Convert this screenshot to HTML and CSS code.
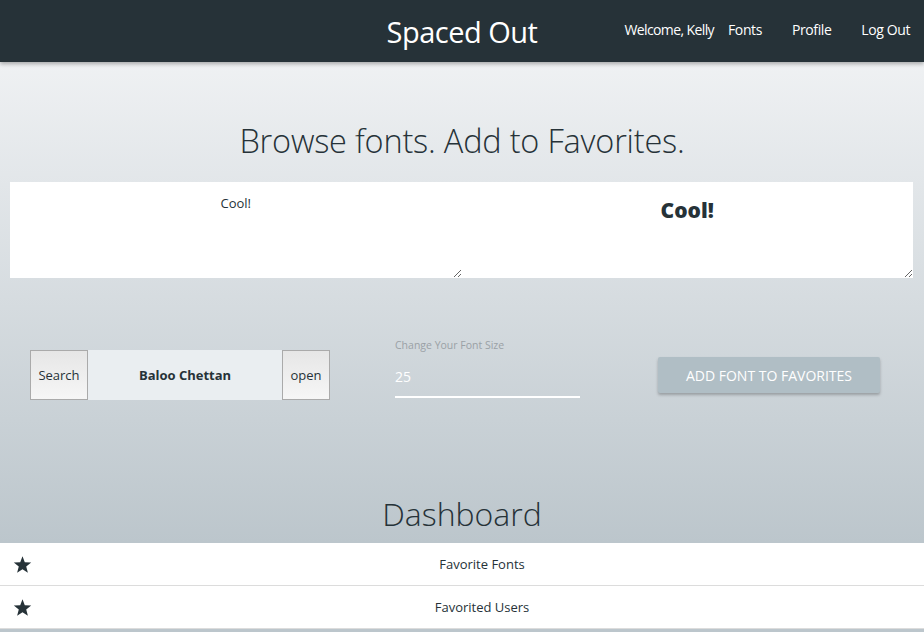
FILE: index.html
```html
<!DOCTYPE html>
<html>
<head>
<meta charset="utf-8">
<link rel="stylesheet" href="styles.css">
</head>
<body>
<nav class="navbar">
  <div class="brand">Spaced Out</div>
  <ul class="nav-links">
    <li class="welcome">Welcome, Kelly</li>
    <li>Fonts</li>
    <li>Profile</li>
    <li>Log Out</li>
  </ul>
</nav>
<main class="main">
  <h1 class="headline">Browse fonts. Add to Favorites.</h1>
  <div class="preview-row">
    <textarea class="preview plain">Cool!</textarea>
    <textarea class="preview styled">Cool!</textarea>
  </div>
  <div class="controls">
    <div class="picker">
      <button class="pick-btn">Search</button>
      <div class="font-name">Baloo Chettan</div>
      <button class="pick-btn">open</button>
    </div>
    <div class="size-field">
      <label class="size-label">Change Your Font Size</label>
      <input class="size-input" type="text" value="25">
    </div>
    <div class="add-wrap">
      <button class="add-btn">ADD FONT TO FAVORITES</button>
    </div>
  </div>
  <h2 class="dash-title">Dashboard</h2>
  <ul class="dash-list">
    <li class="dash-item">
      <svg class="star" viewBox="0 0 24 24" width="19" height="19"><path d="M12 1.5l2.9 7.6 8.1.4-6.3 5.1 2.1 7.9L12 18l-6.8 4.5 2.1-7.9L1 9.5l8.1-.4z" fill="#263238"/></svg>
      <span class="dash-text">Favorite Fonts</span>
    </li>
    <li class="dash-item">
      <svg class="star" viewBox="0 0 24 24" width="19" height="19"><path d="M12 1.5l2.9 7.6 8.1.4-6.3 5.1 2.1 7.9L12 18l-6.8 4.5 2.1-7.9L1 9.5l8.1-.4z" fill="#263238"/></svg>
      <span class="dash-text">Favorited Users</span>
    </li>
  </ul>
</main>
</body>
</html>
```
FILE: styles.css
```css
* { box-sizing: border-box; }
html, body { margin: 0; padding: 0; }
body {
  font-family: "Open Sans", "DejaVu Sans", sans-serif;
  color: #263238;
  background: #bcc6cc;
  height: 632px;
  overflow: hidden;
}
.navbar {
  height: 62px;
  background: #263238;
  display: flex;
  align-items: center;
  position: relative;
  box-shadow: 0 2px 4px rgba(0,0,0,0.3);
  z-index: 2;
}
.brand {
  position: absolute;
  left: 0; right: 0;
  text-align: center;
  color: #fff;
  font-size: 29px;
  font-weight: 400;
  letter-spacing: -0.5px;
  top: 12px;
}
.nav-links {
  margin: 0 0 0 auto;
  padding: 0 14px 0 0;
  list-style: none;
  display: flex;
  gap: 30px;
  color: #fff;
  font-size: 14px;
  letter-spacing: -0.4px;
  position: relative;
  top: -2px;
}
.nav-links .welcome { margin-right: -16px; letter-spacing: -0.6px; }
.main {
  background: linear-gradient(to bottom, #eff1f3 0px, #bcc6cc 480px);
  height: 570px;
  padding-top: 58px;
}
.headline {
  margin: 0;
  text-align: center;
  font-size: 32.5px;
  font-weight: 300;
  letter-spacing: -0.2px;
  line-height: 42px;
}
.preview-row {
  display: flex;
  padding: 0 11px 0 10px;
  margin-top: 20px;
}
.preview {
  flex: 1;
  height: 96px;
  border: none;
  background: #fff;
  text-align: center;
  color: #263238;
  resize: both;
  outline: none;
  margin: 0;
  display: block;
}
.preview.plain {
  font-family: "Open Sans", sans-serif;
  font-size: 13px;
  padding-top: 12px;
}
.preview.styled {
  font-family: "Open Sans", sans-serif;
  font-weight: 800;
  font-size: 21px;
  padding-top: 14px;
}
.controls {
  display: flex;
  align-items: center;
  margin-top: 72px;
  padding-left: 30px;
}
.picker {
  display: flex;
  height: 50px;
  width: 300px;
}
.pick-btn {
  border: 1px solid #aaa;
  background: linear-gradient(to bottom, #e6e6e6, #f6f6f6);
  font-family: "Open Sans", sans-serif;
  font-size: 13px;
  color: #263238;
  padding: 0 6px;
  margin: 0;
}
.pick-btn:first-child { width: 58px; }
.pick-btn:last-child { width: 48px; }
.font-name {
  flex: 1;
  background: #eaeef1;
  display: flex;
  align-items: center;
  justify-content: center;
  font-weight: 700;
  font-size: 13px;
}
.size-field {
  margin-left: 65px;
  width: 185px;
  display: flex;
  flex-direction: column;
  padding-bottom: 2px;
}
.size-label {
  font-size: 10.5px;
  color: #9aa1a6;
  margin-top: -12px;
}
.size-input {
  margin-top: 15px;
  background: transparent;
  border: none;
  border-bottom: 2px solid #fff;
  color: #fff;
  font-family: "Open Sans", sans-serif;
  font-size: 14px;
  padding: 0 0 10px 0;
  outline: none;
  width: 185px;
}
.add-wrap {
  margin-left: 78px;
}
.add-btn {
  width: 222px;
  height: 36px;
  background: #b0bec5;
  color: #fff;
  border: none;
  font-family: "Open Sans", sans-serif;
  font-size: 14px;
  letter-spacing: 0;
  box-shadow: 0 2px 3px rgba(0,0,0,0.25);
  border-radius: 2px;
}
.dash-title {
  margin: 92px 0 0 0;
  text-align: center;
  font-size: 32px;
  font-weight: 300;
  line-height: 44px;
  height: 51px;
}
.dash-list {
  list-style: none;
  margin: 0;
  padding: 0;
  background: #fff;
}
.dash-item {
  display: flex;
  align-items: center;
  height: 43px;
  border-bottom: 1px solid #dcdcdc;
  position: relative;
  font-size: 13px;
  padding-left: 40px;
}
.star {
  position: absolute;
  left: 13px;
  top: 12px;
}
.dash-text {
  flex: 1;
  text-align: center;
}
```
